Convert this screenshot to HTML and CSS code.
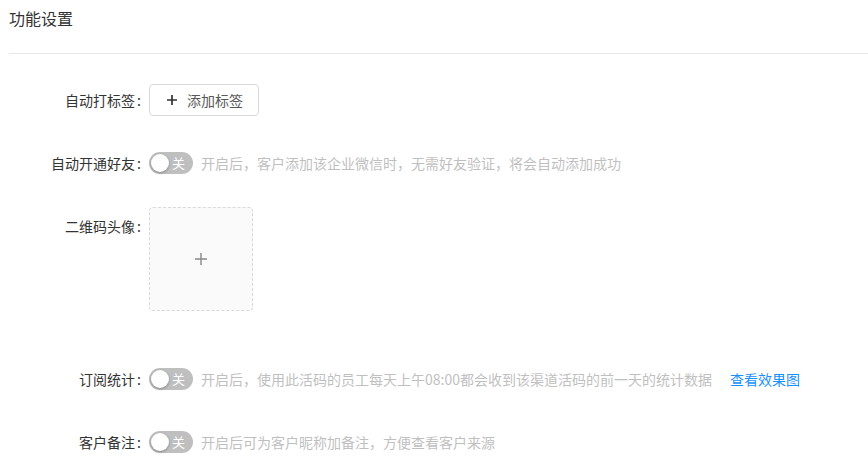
FILE: index.html
```html
<!DOCTYPE html>
<html lang="zh-CN">
<head>
<meta charset="utf-8">
<title>功能设置</title>
<link rel="stylesheet" href="styles.css">
</head>
<body>
<div class="page">
  <div class="header">功能设置</div>
  <div class="form">
    <div class="row">
      <div class="label">自动打标签<span class="colon">:</span></div>
      <div class="control">
        <button class="btn">
          <svg class="btn-icon" width="14" height="14" viewBox="0 0 14 14"><path d="M7 2v10M2 7h10" stroke="#333" stroke-width="1.7" fill="none"/></svg>
          <span>添加标签</span>
        </button>
      </div>
    </div>
    <div class="row">
      <div class="label">自动开通好友<span class="colon">:</span></div>
      <div class="control">
        <span class="switch"><span class="knob"></span><span class="switch-text">关</span></span>
        <span class="desc">开启后，客户添加该企业微信时，无需好友验证，将会自动添加成功</span>
      </div>
    </div>
    <div class="row row-upload">
      <div class="label label-top">二维码头像<span class="colon">:</span></div>
      <div class="control">
        <div class="upload">
          <svg width="14" height="14" viewBox="0 0 14 14"><path d="M7 1v12M1 7h12" stroke="#888" stroke-width="1.4" fill="none"/></svg>
        </div>
      </div>
    </div>
    <div class="row">
      <div class="label">订阅统计<span class="colon">:</span></div>
      <div class="control">
        <span class="switch"><span class="knob"></span><span class="switch-text">关</span></span>
        <span class="desc">开启后，使用此活码的员工每天上午08:00都会收到该渠道活码的前一天的统计数据</span>
        <a class="link" href="#">查看效果图</a>
      </div>
    </div>
    <div class="row">
      <div class="label">客户备注<span class="colon">:</span></div>
      <div class="control">
        <span class="switch"><span class="knob"></span><span class="switch-text">关</span></span>
        <span class="desc">开启后可为客户昵称加备注，方便查看客户来源</span>
      </div>
    </div>
  </div>
</div>
</body>
</html>
```

FILE: styles.css
```css
* { box-sizing: border-box; }
html, body {
  margin: 0;
  padding: 0;
  background: #fff;
}
body {
  font-family: "Noto Sans CJK SC", "Noto Sans", sans-serif;
  font-size: 14px;
  color: #333;
}
.page {
  width: 868px;
}
.header {
  margin-left: 9px;
  height: 54px;
  padding-top: 6px;
  line-height: 24px;
  font-size: 16px;
  color: #333;
  border-bottom: 1px solid #e8e8e8;
}
.form {
  padding-top: 30px;
}
.row {
  display: flex;
  align-items: center;
  height: 32px;
  margin-bottom: 31px;
}
.row-upload {
  align-items: flex-start;
  height: 104px;
  margin-top: -3px;
  margin-bottom: 52px;
}
.label {
  width: 149px;
  flex: none;
  text-align: right;
  padding-right: 8px;
  line-height: 32px;
  color: #333;
  white-space: nowrap;
}
.label-top {
  padding-top: 3px;
}
.colon {
  margin-left: 2px;
}
.control {
  display: flex;
  align-items: center;
}
.btn {
  display: flex;
  align-items: center;
  height: 32px;
  padding: 0 15px;
  border: 1px solid #d9d9d9;
  border-radius: 4px;
  background: #fff;
  font-family: inherit;
  font-size: 14px;
  color: #595959;
}
.btn-icon {
  margin-right: 8px;
}
.switch {
  position: relative;
  display: inline-block;
  width: 44px;
  height: 22px;
  border-radius: 11px;
  background: #bfbfbf;
  flex: none;
}
.knob {
  position: absolute;
  top: 2px;
  left: 2px;
  width: 18px;
  height: 18px;
  border-radius: 50%;
  background: #fff;
  box-shadow: 0 1px 3px rgba(0, 0, 0, 0.3);
}
.switch-text {
  position: absolute;
  top: 0;
  right: 8px;
  line-height: 22px;
  font-size: 13px;
  color: #fff;
}
.desc {
  margin-left: 8px;
  color: #bfbfbf;
  white-space: nowrap;
}
.link {
  margin-left: 18px;
  color: #1890ff;
  text-decoration: none;
  white-space: nowrap;
}
.upload {
  width: 104px;
  height: 104px;
  border: 1px dashed #d9d9d9;
  border-radius: 4px;
  background: #fafafa;
  display: flex;
  align-items: center;
  justify-content: center;
}
```
